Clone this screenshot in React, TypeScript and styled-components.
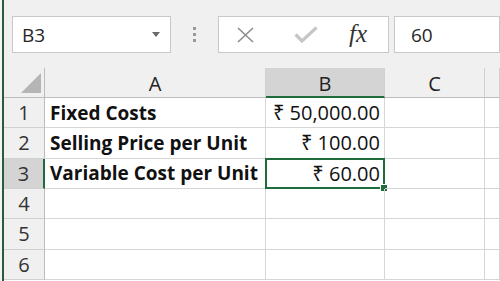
import React from "react";
import styled, { createGlobalStyle } from "styled-components";

const GlobalStyle = createGlobalStyle`
  html, body {
    margin: 0;
    padding: 0;
    background: #ffffff;
  }
  body {
    font-family: "Open Sans", "Noto Sans", "DejaVu Sans", sans-serif;
  }
`;

const GREEN = "#1e6b3c";
const GRID = "#d6d6d6";

const Frame = styled.div`
  width: 500px;
  height: 281px;
  overflow: hidden;
  padding-left: 2px;
  box-sizing: border-box;
  background: #f4f4f4;
`;

const Window = styled.div`
  height: 100%;
  border-left: 2px solid #2c5b3c;
  display: flex;
  flex-direction: column;
`;

const Toolbar = styled.div`
  height: 68px;
  box-sizing: border-box;
  background: #f0f0f0;
  display: flex;
  align-items: flex-start;
  padding: 16px 0 0 8px;
`;

const Box = styled.div<{ $width?: number }>`
  height: 37px;
  box-sizing: border-box;
  background: #ffffff;
  border: 1px solid #c8c8c8;
  display: flex;
  align-items: center;
  ${(p) => (p.$width ? `width: ${p.$width}px;` : "flex: 1;")}
`;

const NameText = styled.span`
  flex: 1;
  padding-left: 9px;
  font-size: 19px;
  color: #262626;
`;

const Caret = styled.span`
  width: 0;
  height: 0;
  border-left: 4px solid transparent;
  border-right: 4px solid transparent;
  border-top: 5px solid #6a6a6a;
  margin-right: 10px;
`;

const Grip = styled.div`
  width: 47px;
  height: 37px;
  display: flex;
  flex-direction: column;
  align-items: center;
  justify-content: center;
  gap: 3px;
  span {
    width: 3px;
    height: 3px;
    background: #9a9a9a;
  }
`;

const FxButtons = styled.div`
  display: flex;
  align-items: center;
  width: 100%;
  padding-left: 18px;
  gap: 40px;
`;

const Fx = styled.span`
  font-family: "Liberation Serif", "DejaVu Serif", serif;
  font-style: italic;
  font-size: 25px;
  color: #333;
  margin-left: -9px;
  padding-bottom: 2px;
`;

const FormulaText = styled.span`
  padding-left: 16px;
  font-size: 19px;
  color: #262626;
`;

const Sheet = styled.div`
  flex: 1;
  display: grid;
  grid-template-columns: 41px 221px 119px 100px 1fr;
  grid-template-rows: 30px repeat(6, 30.33px);
  background: #ffffff;
`;

const Cell = styled.div<{ $align?: "left" | "right"; $bold?: boolean }>`
  position: relative;
  box-sizing: border-box;
  border-right: 1px solid ${GRID};
  border-bottom: 1px solid ${GRID};
  display: flex;
  align-items: center;
  justify-content: ${(p) => (p.$align === "right" ? "flex-end" : "flex-start")};
  padding: 0 4px 0 5px;
  font-size: ${(p) => (p.$bold ? "19px" : "20px")};
  font-weight: ${(p) => (p.$bold ? 700 : 400)};
  color: #111;
  white-space: nowrap;
`;

const ColHead = styled.div<{ $active?: boolean }>`
  box-sizing: border-box;
  background: ${(p) => (p.$active ? "#d4d4d4" : "#f0f0f0")};
  border-right: 1px solid #d0d0d0;
  border-bottom: ${(p) => (p.$active ? `2px solid ${GREEN}` : "1px solid #bdbdbd")};
  display: flex;
  align-items: center;
  justify-content: center;
  font-size: 20px;
  color: #222;
  padding-top: 2px;
`;

const Corner = styled(ColHead)`
  align-items: flex-end;
  justify-content: flex-end;
  padding: 0 3px 4px 0;
  border-right: 1px solid #bdbdbd;
`;

const RowHead = styled.div<{ $active?: boolean }>`
  box-sizing: border-box;
  background: ${(p) => (p.$active ? "#d4d4d4" : "#f0f0f0")};
  border-right: ${(p) => (p.$active ? `2px solid ${GREEN}` : "1px solid #bdbdbd")};
  border-bottom: 1px solid #d0d0d0;
  display: flex;
  align-items: center;
  justify-content: center;
  font-size: 20px;
  color: #333;
`;

const Selection = styled.div`
  position: absolute;
  inset: -1px -1px -1px -1px;
  border: 2px solid ${GREEN};
  pointer-events: none;
  &::after {
    content: "";
    position: absolute;
    right: -5px;
    bottom: -5px;
    width: 6px;
    height: 6px;
    background: ${GREEN};
    border: 1px solid #fff;
  }
`;

const rows: [string, string][] = [
  ["Fixed Costs", "₹ 50,000.00"],
  ["Selling Price per Unit", "₹ 100.00"],
  ["Variable Cost per Unit", "₹ 60.00"],
  ["", ""],
  ["", ""],
  ["", ""],
];

export default function App() {
  return (
    <>
      <GlobalStyle />
      <Frame>
        <Window>
          <Toolbar>
            <Box $width={159}>
              <NameText>B3</NameText>
              <Caret />
            </Box>
            <Grip>
              <span />
              <span />
              <span />
            </Grip>
            <Box $width={171}>
              <FxButtons>
                <svg width="17" height="16" viewBox="0 0 17 16">
                  <path d="M1 1 L16 15 M16 1 L1 15" stroke="#8c8c8c" strokeWidth="1.6" fill="none" />
                </svg>
                <svg width="24" height="17" viewBox="0 0 24 17">
                  <path d="M1.5 8.5 L8 15 L22.5 1.5" stroke="#c6c6c6" strokeWidth="3.2" fill="none" />
                </svg>
                <Fx>fx</Fx>
              </FxButtons>
            </Box>
            <div style={{ width: 5 }} />
            <Box>
              <FormulaText>60</FormulaText>
            </Box>
          </Toolbar>
          <Sheet>
            <Corner>
              <svg width="20" height="20" viewBox="0 0 20 20">
                <polygon points="20,0 20,20 0,20" fill="#b5b5b5" />
              </svg>
            </Corner>
            <ColHead>A</ColHead>
            <ColHead $active>B</ColHead>
            <ColHead>C</ColHead>
            <ColHead />
            {rows.map(([label, value], i) => (
              <React.Fragment key={i}>
                <RowHead $active={i === 2}>{i + 1}</RowHead>
                <Cell $bold>{label}</Cell>
                <Cell $align="right">
                  {value}
                  {i === 2 && <Selection />}
                </Cell>
                <Cell />
                <Cell />
              </React.Fragment>
            ))}
          </Sheet>
        </Window>
      </Frame>
    </>
  );
}
